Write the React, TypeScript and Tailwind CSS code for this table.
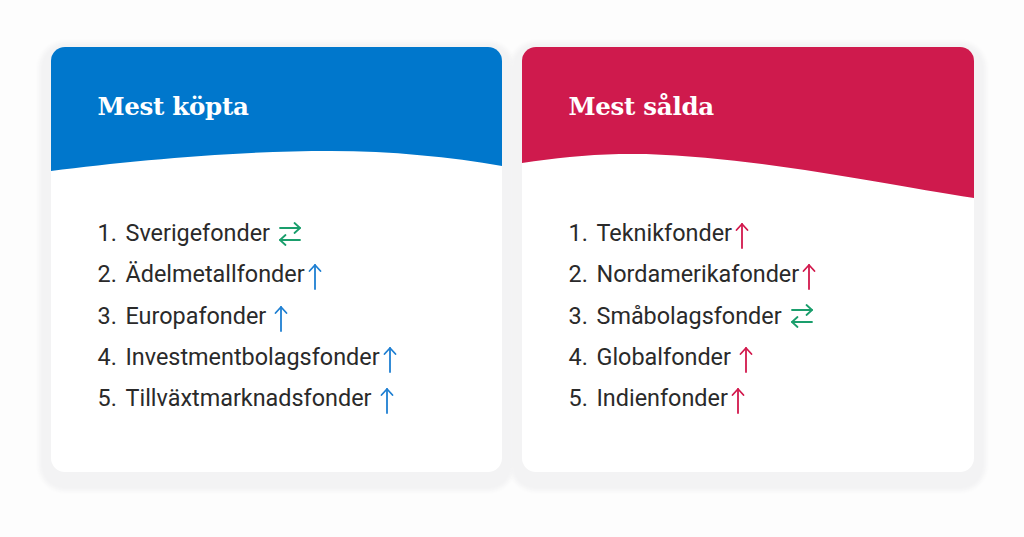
type Trend = "up" | "swap"

interface Item {
  name: string
  trend: Trend
  gap?: boolean
}

const bought: Item[] = [
  { name: "Sverigefonder", trend: "swap", gap: true },
  { name: "Ädelmetallfonder", trend: "up" },
  { name: "Europafonder", trend: "up", gap: true },
  { name: "Investmentbolagsfonder", trend: "up" },
  { name: "Tillväxtmarknadsfonder", trend: "up", gap: true },
]

const sold: Item[] = [
  { name: "Teknikfonder", trend: "up" },
  { name: "Nordamerikafonder", trend: "up" },
  { name: "Småbolagsfonder", trend: "swap", gap: true },
  { name: "Globalfonder", trend: "up", gap: true },
  { name: "Indienfonder", trend: "up" },
]

function UpArrow({ color }: { color: string }) {
  return (
    <svg width="14" height="27" viewBox="0 0 14 27" fill="none" stroke={color} strokeWidth="1.8" strokeLinecap="round" strokeLinejoin="round" className="translate-y-[2px]">
      <path d="M7 2v24" />
      <path d="M1.5 8L7 2l5.5 6" />
    </svg>
  )
}

function SwapArrow() {
  return (
    <svg width="24" height="26" viewBox="0 0 24 26" fill="none" stroke="#1a9e6c" strokeWidth="1.8" strokeLinecap="round" strokeLinejoin="round">
      <path d="M2 7h20" />
      <path d="M16.5 2l5.5 5-5.5 5" />
      <path d="M22 19H2" />
      <path d="M7.5 14L2 19l5.5 5" />
    </svg>
  )
}

function FundList({ items, arrow }: { items: Item[]; arrow: string }) {
  return (
    <ol className="pl-[47px] text-[23.4px] text-[#2a2a2a] font-['Roboto',sans-serif]">
      {items.map((item, i) => (
        <li key={item.name} className="flex items-center h-[41.3px]">
          <span className="w-[28px]">{i + 1}.</span>
          <span>{item.name}</span>
          <span className={item.gap ? "ml-[8px] flex" : "ml-[3px] flex"}>
            {item.trend === "swap" ? <SwapArrow /> : <UpArrow color={arrow} />}
          </span>
        </li>
      ))}
    </ol>
  )
}

function Card({
  title,
  color,
  width,
  bandHeight,
  wave,
  waveHeight,
  items,
  arrow,
}: {
  title: string
  color: string
  width: number
  bandHeight: string
  wave: string
  waveHeight: number
  items: Item[]
  arrow: string
}) {
  return (
    <div
      className="h-[425px] rounded-[14px] bg-white overflow-hidden shadow-[0_7px_4px_12px_#f3f3f4]"
      style={{ width }}
    >
      <div className="h-[166px]">
        <div className={`${bandHeight} pl-[47px] pt-[44px]`} style={{ background: color }}>
          <h2 className="text-[24.5px] leading-[32px] font-bold text-white font-['DejaVu_Serif',serif] tracking-[-0.3px]">
            {title}
          </h2>
        </div>
        <svg width={width} height={waveHeight} viewBox={`0 0 451 ${waveHeight}`} preserveAspectRatio="none" className="block">
          <path d={wave} fill={color} />
        </svg>
      </div>
      <FundList items={items} arrow={arrow} />
    </div>
  )
}

export default function App() {
  return (
    <div className="w-[1024px] h-[537px] bg-[#fdfdfd] flex justify-center gap-[20px] pt-[47px]">
      <Card
        title="Mest köpta"
        color="#0077cc"
        width={451}
        bandHeight="h-[104px]"
        waveHeight={21}
        wave="M0 0H451V15C400 6 340 0 280 0C180 0 80 10 0 20Z"
        items={bought}
        arrow="#1e7fd2"
      />
      <Card
        title="Mest sålda"
        color="#cf1a4d"
        width={452}
        bandHeight="h-[107px]"
        waveHeight={45}
        wave="M0 0H451V44C360 30 240 4 124 0C80 -1 40 3 0 9Z"
        items={sold}
        arrow="#d2184c"
      />
    </div>
  )
}
